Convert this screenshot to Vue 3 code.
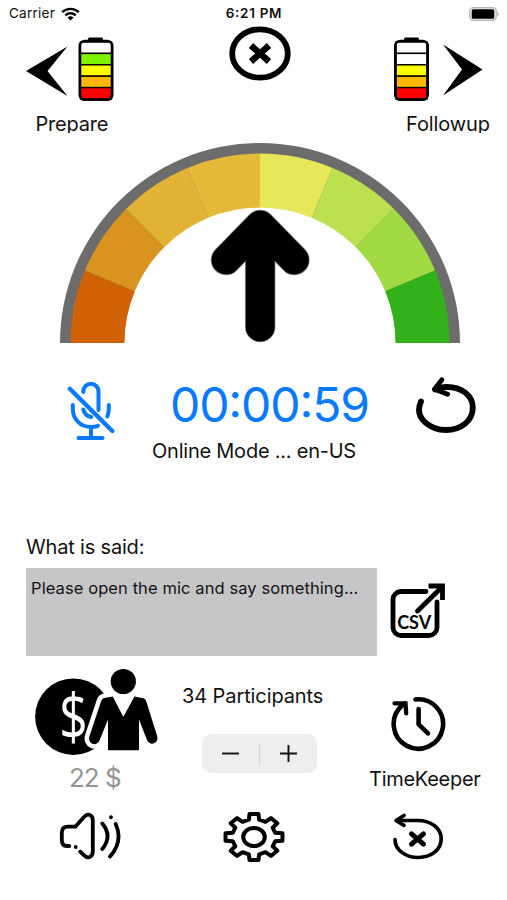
<script setup>
const cx = 200
const cy = 201
const colors = ['#d16105', '#d8941e', '#e1b233', '#e5ba38', '#e7e75a', '#bbe151', '#a1da42', '#32b11b']

function point(r, deg) {
  const a = (deg * Math.PI) / 180
  return `${(cx - r * Math.cos(a)).toFixed(2)} ${(cy - r * Math.sin(a)).toFixed(2)}`
}

const segments = colors.map((color, i) => {
  const from = i * 22.5
  const to = from + 22.5
  return {
    color,
    d: `M${point(189.5, from)}A189.5 189.5 0 0 1 ${point(189.5, to)}L${point(135.5, to)}A135.5 135.5 0 0 0 ${point(135.5, from)}Z`,
  }
})

// Outline of an eight-tooth gear, slightly wider than tall
const gearPoints = []
for (let i = 0; i < 8; i++) {
  for (const [offset, r] of [[-13.5, 0.76], [-9, 1], [9, 1], [13.5, 0.76]]) {
    const a = ((i * 45 + offset) * Math.PI) / 180
    gearPoints.push(`${(32 + 28.8 * r * Math.cos(a)).toFixed(2)},${(27 + 23.4 * r * Math.sin(a)).toFixed(2)}`)
  }
}
const gear = gearPoints.join(' ')

const batteries = {
  prepare: ['#fff', '#7cf400', '#ff0', '#ffb800', '#f00'],
  followup: ['#fff', '#fff', '#ff0', '#ffb800', '#f00'],
}
</script>

<template>
  <main class="screen">
    <header class="status">
      <div class="carrier">
        <span>Carrier</span>
        <svg width="19" height="14" viewBox="0 0 19 14">
          <g fill="none" stroke="#000" stroke-width="2.4">
            <path d="M1.2 5.2a12 12 0 0 1 16.6 0" />
            <path d="M4.3 8.4a7.5 7.5 0 0 1 10.4 0" />
          </g>
          <path d="M9.5 13.6 6.5 10.6a4.3 4.3 0 0 1 6 0Z" />
        </svg>
      </div>
      <span class="clock">6:21 PM</span>
      <svg class="power" width="31" height="14" viewBox="0 0 31 14">
        <rect x=".8" y=".8" width="26.4" height="12.4" rx="3.5" fill="#fff" stroke="#b5b5b5" stroke-width="1.4" />
        <rect x="2.7" y="2.3" width="22.6" height="9.4" rx="1.5" />
        <path d="M28.5 4.8q3 2.2 0 4.4z" fill="#b5b5b5" />
      </svg>
    </header>

    <nav class="top">
      <button class="nav prepare">
        <svg width="90" height="68" viewBox="26 36 90 68">
          <path d="M26 71 67.5 46.5 47.5 71l20 25z" />
          <rect x="88" y="37.6" width="15" height="5" rx="1.5" />
          <rect v-for="(c, i) in batteries.prepare" :key="i" x="80.5" :y="42 + i * 11.4" width="31" height="11.4" :fill="c" stroke="#000" stroke-width="1.4" />
          <rect x="79.8" y="41" width="32.4" height="58.8" rx="5" fill="none" stroke="#000" stroke-width="2.6" />
        </svg>
        <span class="label">Prepare</span>
      </button>
      <button class="close">
        <svg width="62" height="56" viewBox="0 0 62 56">
          <ellipse cx="31" cy="27.5" rx="27.8" ry="24.2" fill="none" stroke="#000" stroke-width="5.8" />
          <path d="m22 19.5 18 16M40 19.5l-18 16" stroke="#000" stroke-width="6.4" />
        </svg>
      </button>
      <button class="nav followup">
        <svg width="90" height="68" viewBox="393 36 90 68">
          <path d="m482.5 69.5-39.5-25 19 25-19 26z" />
          <rect x="404" y="37.6" width="15" height="5" rx="1.5" />
          <rect v-for="(c, i) in batteries.followup" :key="i" x="396" :y="42 + i * 11.4" width="31" height="11.4" :fill="c" stroke="#000" stroke-width="1.4" />
          <rect x="395.3" y="41" width="32.4" height="58.8" rx="5" fill="none" stroke="#000" stroke-width="2.6" />
        </svg>
        <span class="label">Followup</span>
      </button>
    </nav>

    <section class="gauge">
      <svg width="400" height="201" viewBox="0 0 400 201">
        <path d="M0 201a200 200 0 0 1 400 0h-64a136 136 0 0 0-272 0z" fill="#6c6c6c" />
        <path v-for="s in segments" :key="s.color" :d="s.d" :fill="s.color" />
        <g fill="none" stroke-linecap="round" stroke-linejoin="round">
          <path d="m166 118 34.2-35 34.2 35M200.2 83v102" stroke="#999" stroke-width="30.5" />
          <path d="m166 118 34.2-35 34.2 35M200.2 83v102" stroke="#000" stroke-width="29" />
        </g>
      </svg>
    </section>

    <section class="timer">
      <button class="mic">
        <svg width="50" height="62" viewBox="66 380 50 62" fill="none" stroke="#087aff" stroke-width="4" stroke-linecap="round">
          <path d="M83.3 392v-.6a7.6 7.6 0 0 1 15.2 0V410" />
          <path d="M83.3 409.5q1.5 6.5 8 7.5" />
          <path d="M72.8 405v3.5c0 11 7.8 18.5 18.2 18.5q4 0 7-1.2M108.800 405v4q0 4-1.5 7.5M91 428v10M78.500 438h24" />
          <path d="m69.8 388.8 42.5 42.2" stroke-width="4.4" />
        </svg>
      </button>
      <time class="elapsed">00:00:59</time>
      <button>
        <svg width="62" height="60" viewBox="415 376 62 60" fill="none" stroke="#000" stroke-width="5.8" stroke-linecap="round" stroke-linejoin="round">
          <path d="M421 401.5C413 419 432 430 446 430c15 0 26.800-9 26.800-22.500C472.800 395 461 387 447 387q-7 0-12 2.500" />
          <path d="m441.8 379.7-7.3 9.6 13.2 4.9" stroke-width="4.8" />
        </svg>
      </button>
    </section>
    <p class="mode">Online Mode ... en-US</p>

    <h2 class="heading">What is said:</h2>
    <section class="speech">
      <div class="transcript">Please open the mic and say something...</div>
      <button>
        <svg width="58" height="58" viewBox="389 584 58 58">
          <g fill="none" stroke="#000" stroke-width="4.8">
            <path d="M426 592.500h-25a8 8 0 0 0-8 8v28a8 8 0 0 0 8 8h28a8 8 0 0 0 8-8V603" stroke-linecap="round" />
            <path d="m417.500 612 24-23.500" stroke-linecap="round" />
            <path d="M428.500 587h14v14" />
          </g>
          <text class="csv" x="397.2" y="629.5">CSV</text>
        </svg>
      </button>
    </section>

    <section class="details">
      <div class="cost">
        <svg width="124" height="88" viewBox="34 668 124 88">
          <circle cx="73.4" cy="716.7" r="38.3" />
          <text class="dollar" transform="translate(73.5 740) scale(.78 1)" text-anchor="middle">$</text>
          <path d="m104 698 9-1.500 10.300 20 11-20 9.200 1.800q2 .7 2.700 3l10.800 34.200c2.500 8-7 11.500-10 4.500l-8-20.500v30.700h-31v-30.700l-8.500 21c-3.500 7-12.500 3-10-4.500l11.500-34.500q.8-2.800 3-3.500z" stroke="#fff" stroke-width="9" stroke-linejoin="round" paint-order="stroke" />
          <path d="m113 696.500 10.300 20 11-20z" fill="#fff" />
          <circle cx="123.3" cy="681.5" r="12.6" />
        </svg>
        <span class="amount">22 $</span>
      </div>
      <div class="people">
        <span>34 Participants</span>
        <div class="stepper">
          <button><svg width="17" height="17" viewBox="0 0 17 17"><path d="M0 8.500h17" stroke="#111" stroke-width="1.9" /></svg></button>
          <i class="divider"></i>
          <button><svg width="17" height="17" viewBox="0 0 17 17"><path d="M0 8.500h17M8.500 0v17" stroke="#111" stroke-width="1.9" /></svg></button>
        </div>
      </div>
      <button class="keeper">
        <svg width="58" height="58" viewBox="390 695 58 58" fill="none" stroke="#000" stroke-width="4.6" stroke-linecap="round" stroke-linejoin="round">
          <path d="M415.500 699.500a24.700 24.700 0 1 1-14 6.500l3-2.500" />
          <path d="M394.500 703.300h11l.7 10" stroke-width="4.3" stroke-linejoin="miter" />
          <path d="M418.600 709v15.300l9.400 9" />
        </svg>
        <span>TimeKeeper</span>
      </button>
    </section>

    <footer class="tools">
      <button>
        <svg width="64" height="50" viewBox="58 812 64 50" fill="none" stroke="#000" stroke-width="3.8" stroke-linecap="round" stroke-linejoin="round">
          <path d="M69.300 846H67q-5.200 0-5.200-6v-7q0-6.300 6-6.300h7.500l8.500-9.500c4-4.500 9-2.500 9 3v31c0 6-5 8-9 4l-3.500-3.500M75.700 847v.1" />
          <path d="M102.300 823.500q10.500 12.500 0 25.500M115.700 824q7.800 17.500-5.700 32.500M111 817.200v.1" />
        </svg>
      </button>
      <button>
        <svg width="64" height="54" viewBox="0 0 64 54" fill="none" stroke="#000" stroke-width="4" stroke-linejoin="round">
          <polygon :points="gear" />
          <ellipse cx="32" cy="27" rx="10.8" ry="9" />
        </svg>
      </button>
      <button>
        <svg width="54" height="50" viewBox="391 812 54 50" fill="none" stroke="#000" stroke-width="3.7" stroke-linecap="round" stroke-linejoin="round">
          <path d="M397 820.500h20.500c14 0 23.700 8 23.700 18.500s-9.700 18.500-23 18.500c-12 0-23.200-7-23.200-18" />
          <path d="m404 815.500-8 5 8 4.800" />
          <path d="m411.500 833.800 12 10.400M423.500 833.800l-12 10.400" stroke-width="5" />
        </svg>
      </button>
    </footer>
  </main>
</template>

<style>
body {
  background: #fff;
}
</style>

<style scoped>
.screen {
  box-sizing: border-box;
  width: 507px;
  height: 900px;
  overflow: hidden;
  background: #fff;
  color: #111;
  font: 400 20px/24px Inter, "Liberation Sans", sans-serif;
}
button {
  display: block;
  padding: 0;
  border: 0;
  background: none;
  color: inherit;
  font: inherit;
  text-align: left;
}
svg {
  display: block;
}
.status {
  display: grid;
  grid-template-columns: 1fr 62px 1fr;
  align-items: center;
  height: 26px;
  padding: 0 8px 0 9px;
  box-sizing: border-box;
  font-size: 13.5px;
  line-height: 27px;
}
.carrier {
  display: flex;
  align-items: center;
  gap: 6px;
  letter-spacing: 0.25px;
}
.clock {
  font-weight: 600;
  font-feature-settings: "calt";
  letter-spacing: 0.7px;
  white-space: nowrap;
  text-align: center;
}
.power {
  justify-self: end;
  margin-right: -1px;
}
.top {
  display: flex;
  justify-content: space-between;
  height: 107px;
  padding: 0 17px 0 26px;
}
.nav {
  display: flex;
  flex-direction: column;
  align-items: flex-start;
  width: 97px;
  padding-top: 10px;
}
.label {
  height: 21px;
  margin-top: 8px;
  overflow: hidden;
  line-height: 24px;
}
.prepare .label {
  margin-left: 9.5px;
  letter-spacing: -0.2px;
}
.followup .label {
  margin-left: 13px;
  letter-spacing: -0.1px;
}
.close {
  align-self: flex-start;
  margin-left: 3px;
}
.gauge {
  padding: 9px 0 0 60px;
}
.timer {
  display: grid;
  grid-template-columns: 104px 245px 62px;
  align-items: start;
  height: 64px;
  padding: 33px 0 0 66px;
}
.mic {
  margin-top: 4px;
}
.elapsed {
  margin-top: -1px;
  color: #087aff;
  font-size: 48px;
  font-weight: 400;
  font-feature-settings: "calt";
  letter-spacing: -1.1px;
  line-height: 60px;
  white-space: nowrap;
}
.mode {
  margin: -1px 0 0;
  padding-left: 152px;
  letter-spacing: -0.23px;
}
.heading {
  margin: 72px 0 0 26px;
  font: inherit;
  letter-spacing: -0.18px;
}
.speech {
  display: flex;
  align-items: center;
  gap: 12px;
  margin: 9px 0 0 26px;
}
.transcript {
  box-sizing: border-box;
  width: 351px;
  height: 88px;
  padding: 8px 5px;
  background: #c6c6c8;
  font-size: 16.5px;
  letter-spacing: 0.09px;
  white-space: nowrap;
}
.csv {
  font: 700 18px Lato, sans-serif;
}
.details {
  display: grid;
  grid-template-columns: 148px 187px 112px;
  margin: 12px 0 0 34px;
}
.amount {
  display: block;
  margin: 7px 0 0 35px;
  color: #949494;
  font-size: 26px;
  font-weight: 400;
  letter-spacing: -1px;
  line-height: 30px;
}
.dollar {
  fill: #fff;
  font: 400 64px "Open Sans", sans-serif;
}
.people {
  padding-top: 16px;
  letter-spacing: -0.1px;
  white-space: nowrap;
}
.stepper {
  display: flex;
  align-items: center;
  justify-content: space-between;
  box-sizing: border-box;
  width: 115px;
  height: 39px;
  margin: 26px 0 0 20.4px;
  padding: 0 20px;
  border-radius: 9px;
  background: #eee;
}
.divider {
  width: 1px;
  height: 22px;
  background: #d2d2d2;
}
.keeper {
  align-self: start;
  padding-top: 27px;
  letter-spacing: -0.28px;
}
.keeper svg {
  margin-left: 21px;
}
.keeper span {
  display: block;
  margin-top: 14px;
}
.tools {
  display: grid;
  grid-template-columns: 164px 169px 54px;
  align-items: center;
  margin: 17px 0 0 58px;
}
</style>
